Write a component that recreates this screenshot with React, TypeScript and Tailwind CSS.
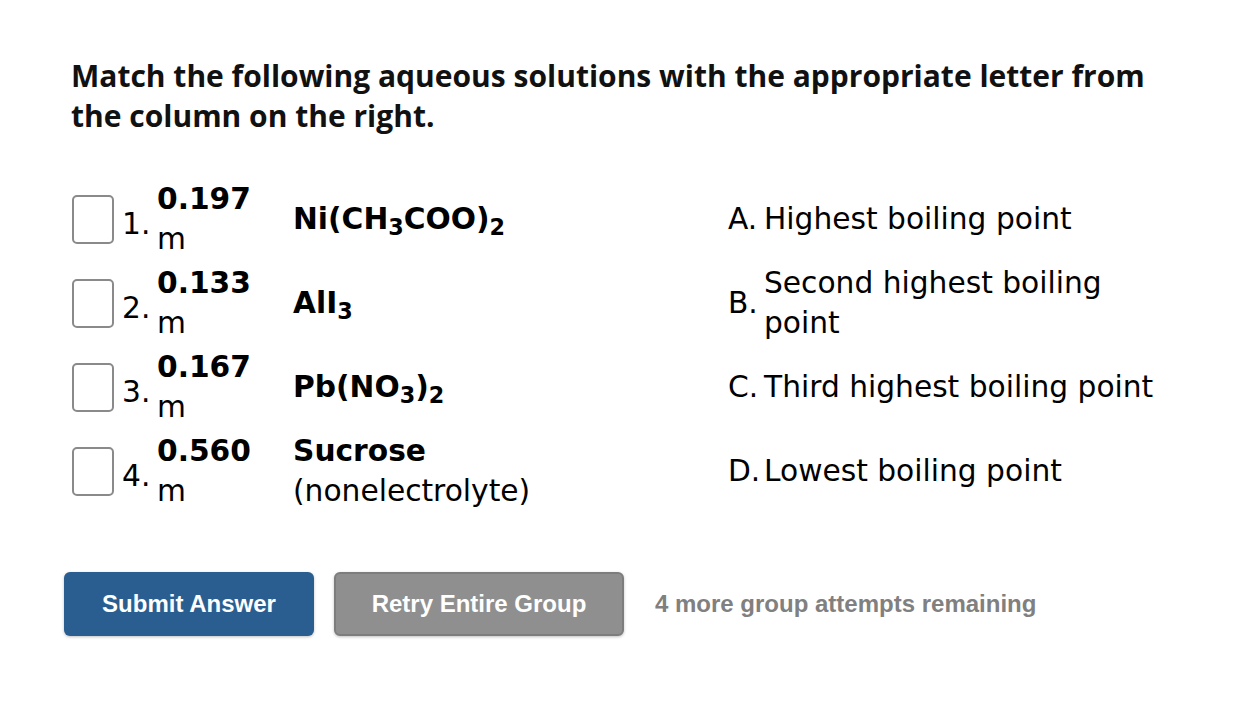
const verdana = "font-['DejaVu_Sans',Verdana,sans-serif]";

const rows = [
  { n: "1.", conc: "0.197", formula: <>Ni(CH<sub>3</sub>COO)<sub>2</sub></> },
  { n: "2.", conc: "0.133", formula: <>AlI<sub>3</sub></> },
  { n: "3.", conc: "0.167", formula: <>Pb(NO<sub>3</sub>)<sub>2</sub></> },
  {
    n: "4.",
    conc: "0.560",
    formula: (
      <>
        Sucrose
        <br />
        <span className="font-normal">(nonelectrolyte)</span>
      </>
    ),
  },
];

const answers = [
  { l: "A.", t: "Highest boiling point" },
  { l: "B.", t: "Second highest boiling point" },
  { l: "C.", t: "Third highest boiling point" },
  { l: "D.", t: "Lowest boiling point" },
];

export default function App() {
  return (
    <div className="w-[1235px] h-[720px] bg-white text-black">
      <div className="pt-[56px] pl-[71px]">
        <h1 className="font-['Open_Sans',sans-serif] font-bold text-[30px] leading-[40px] w-[1100px] text-[#111]">
          Match the following aqueous solutions with the appropriate letter from the column on the right.
        </h1>
      </div>

      <div className={`mt-[41px] flex ${verdana} text-[29.7px] leading-[40px]`}>
        {/* left column */}
        <div className="pl-[72px] w-[728px] flex flex-col">
          {rows.map((r) => (
            <div key={r.n} className="flex h-[84px] items-center">
              <div className="w-[50px] flex">
                <div className="w-[42px] h-[49px] border-2 border-[#8a8a8a] rounded-[5px]" />
              </div>
              <div className="w-[35px] pt-[10px]">{r.n}</div>
              <div className="w-[136px]">
                <div className="font-bold">{r.conc}</div>
                <div>m</div>
              </div>
              <div className="font-bold">{r.formula}</div>
            </div>
          ))}
        </div>

        {/* right column */}
        <div className="flex flex-col">
          {answers.map((a) => (
            <div key={a.l} className="flex h-[84px] items-center">
              <div className="w-[36px]">{a.l}</div>
              <div className={a.l === "B." ? "w-[350px]" : "w-[440px]"}>{a.t}</div>
            </div>
          ))}
        </div>
      </div>

      <div className="mt-[59px] ml-[64px] flex items-center font-['Liberation_Sans',Arial,sans-serif] font-bold text-[24px]">
        <button className="w-[250px] h-[64px] rounded-[6px] bg-[#2a5e90] text-white shadow-[0_1px_3px_rgba(0,0,0,0.25)]">
          Submit Answer
        </button>
        <button className="ml-[20px] w-[290px] h-[64px] rounded-[6px] bg-[#8f8f8f] border-2 border-[#7d7d7d] text-white shadow-[0_1px_3px_rgba(0,0,0,0.25)]">
          Retry Entire Group
        </button>
        <span className="ml-[31px] text-[#808080]">4 more group attempts remaining</span>
      </div>
    </div>
  );
}
